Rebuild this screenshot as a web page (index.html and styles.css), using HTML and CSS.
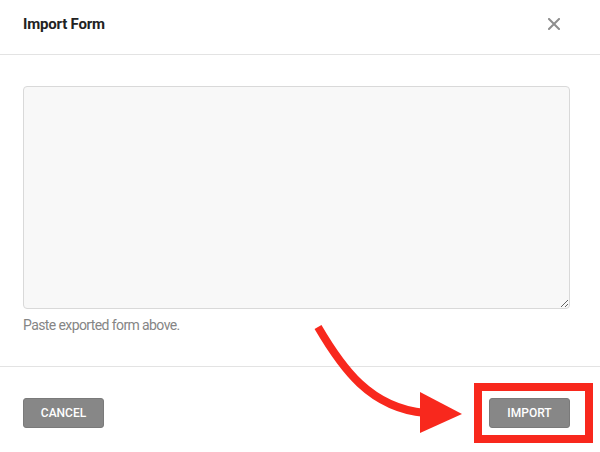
FILE: index.html
```html
<!DOCTYPE html>
<html>
<head>
<meta charset="utf-8">
<link rel="stylesheet" href="styles.css">
</head>
<body>
<div class="dialog">
  <header class="head">
    <h1 class="title">Import Form</h1>
    <button class="close" aria-label="Close">
      <svg width="12" height="12" viewBox="0 0 12 12"><path d="M1 1L11 11M11 1L1 11" stroke="#8e8e8e" stroke-width="2" stroke-linecap="square"/></svg>
    </button>
  </header>
  <main class="content">
    <textarea class="field"></textarea>
    <p class="hint">Paste exported form above.</p>
  </main>
  <footer class="foot">
    <button class="btn">CANCEL</button>
    <button class="btn">IMPORT</button>
  </footer>
</div>
<div class="highlight"></div>
<svg class="arrow" width="600" height="452" viewBox="0 0 600 452">
  <path d="M318 327 C342 368 370 408 425 413" fill="none" stroke="#f8281d" stroke-width="8"/>
  <polygon points="420,392 420,433 462,414" fill="#f8281d"/>
</svg>
</body>
</html>
```
FILE: styles.css
```css
* { box-sizing: border-box; }
html, body { margin: 0; padding: 0; background: #fff; }
body { font-family: Roboto, "Liberation Sans", sans-serif; width: 600px; height: 452px; position: relative; overflow: hidden; }
.dialog { display: flex; flex-direction: column; }
.head { height: 55px; border-bottom: 1px solid #e3e3e3; display: flex; justify-content: space-between; align-items: flex-start; padding: 14px 40px 0 23px; }
.title { margin: 0; font-size: 15px; line-height: 20px; font-weight: 700; color: #222; letter-spacing: -0.2px; }
.close { border: 0; background: none; padding: 0; margin-top: 4px; width: 12px; height: 12px; display: block; }
.close svg { display: block; }
.content { padding: 31px 30px 0 23px; height: 312px; border-bottom: 1px solid #e3e3e3; }
.field { display: block; width: 547px; height: 223px; margin: 0; background: #f8f8f8; border: 1px solid #d9d9d9; border-radius: 4px; resize: both; }
.hint { margin: 7px 0 0; font-size: 14px; line-height: 18px; color: #858585; letter-spacing: -0.6px; }
.foot { display: flex; justify-content: space-between; padding: 31px 30px 0 23px; }
.btn { width: 81px; height: 30px; background: #878787; color: #fff; border: 1px solid #7a7a7a; border-radius: 3px; font-family: Roboto, "Liberation Sans", sans-serif; font-size: 12px; font-weight: 500; padding: 0; }
.highlight { position: absolute; left: 474px; top: 383px; width: 119px; height: 60px; border: 8px solid #f8281d; }
.arrow { position: absolute; left: 0; top: 0; pointer-events: none; }
```
